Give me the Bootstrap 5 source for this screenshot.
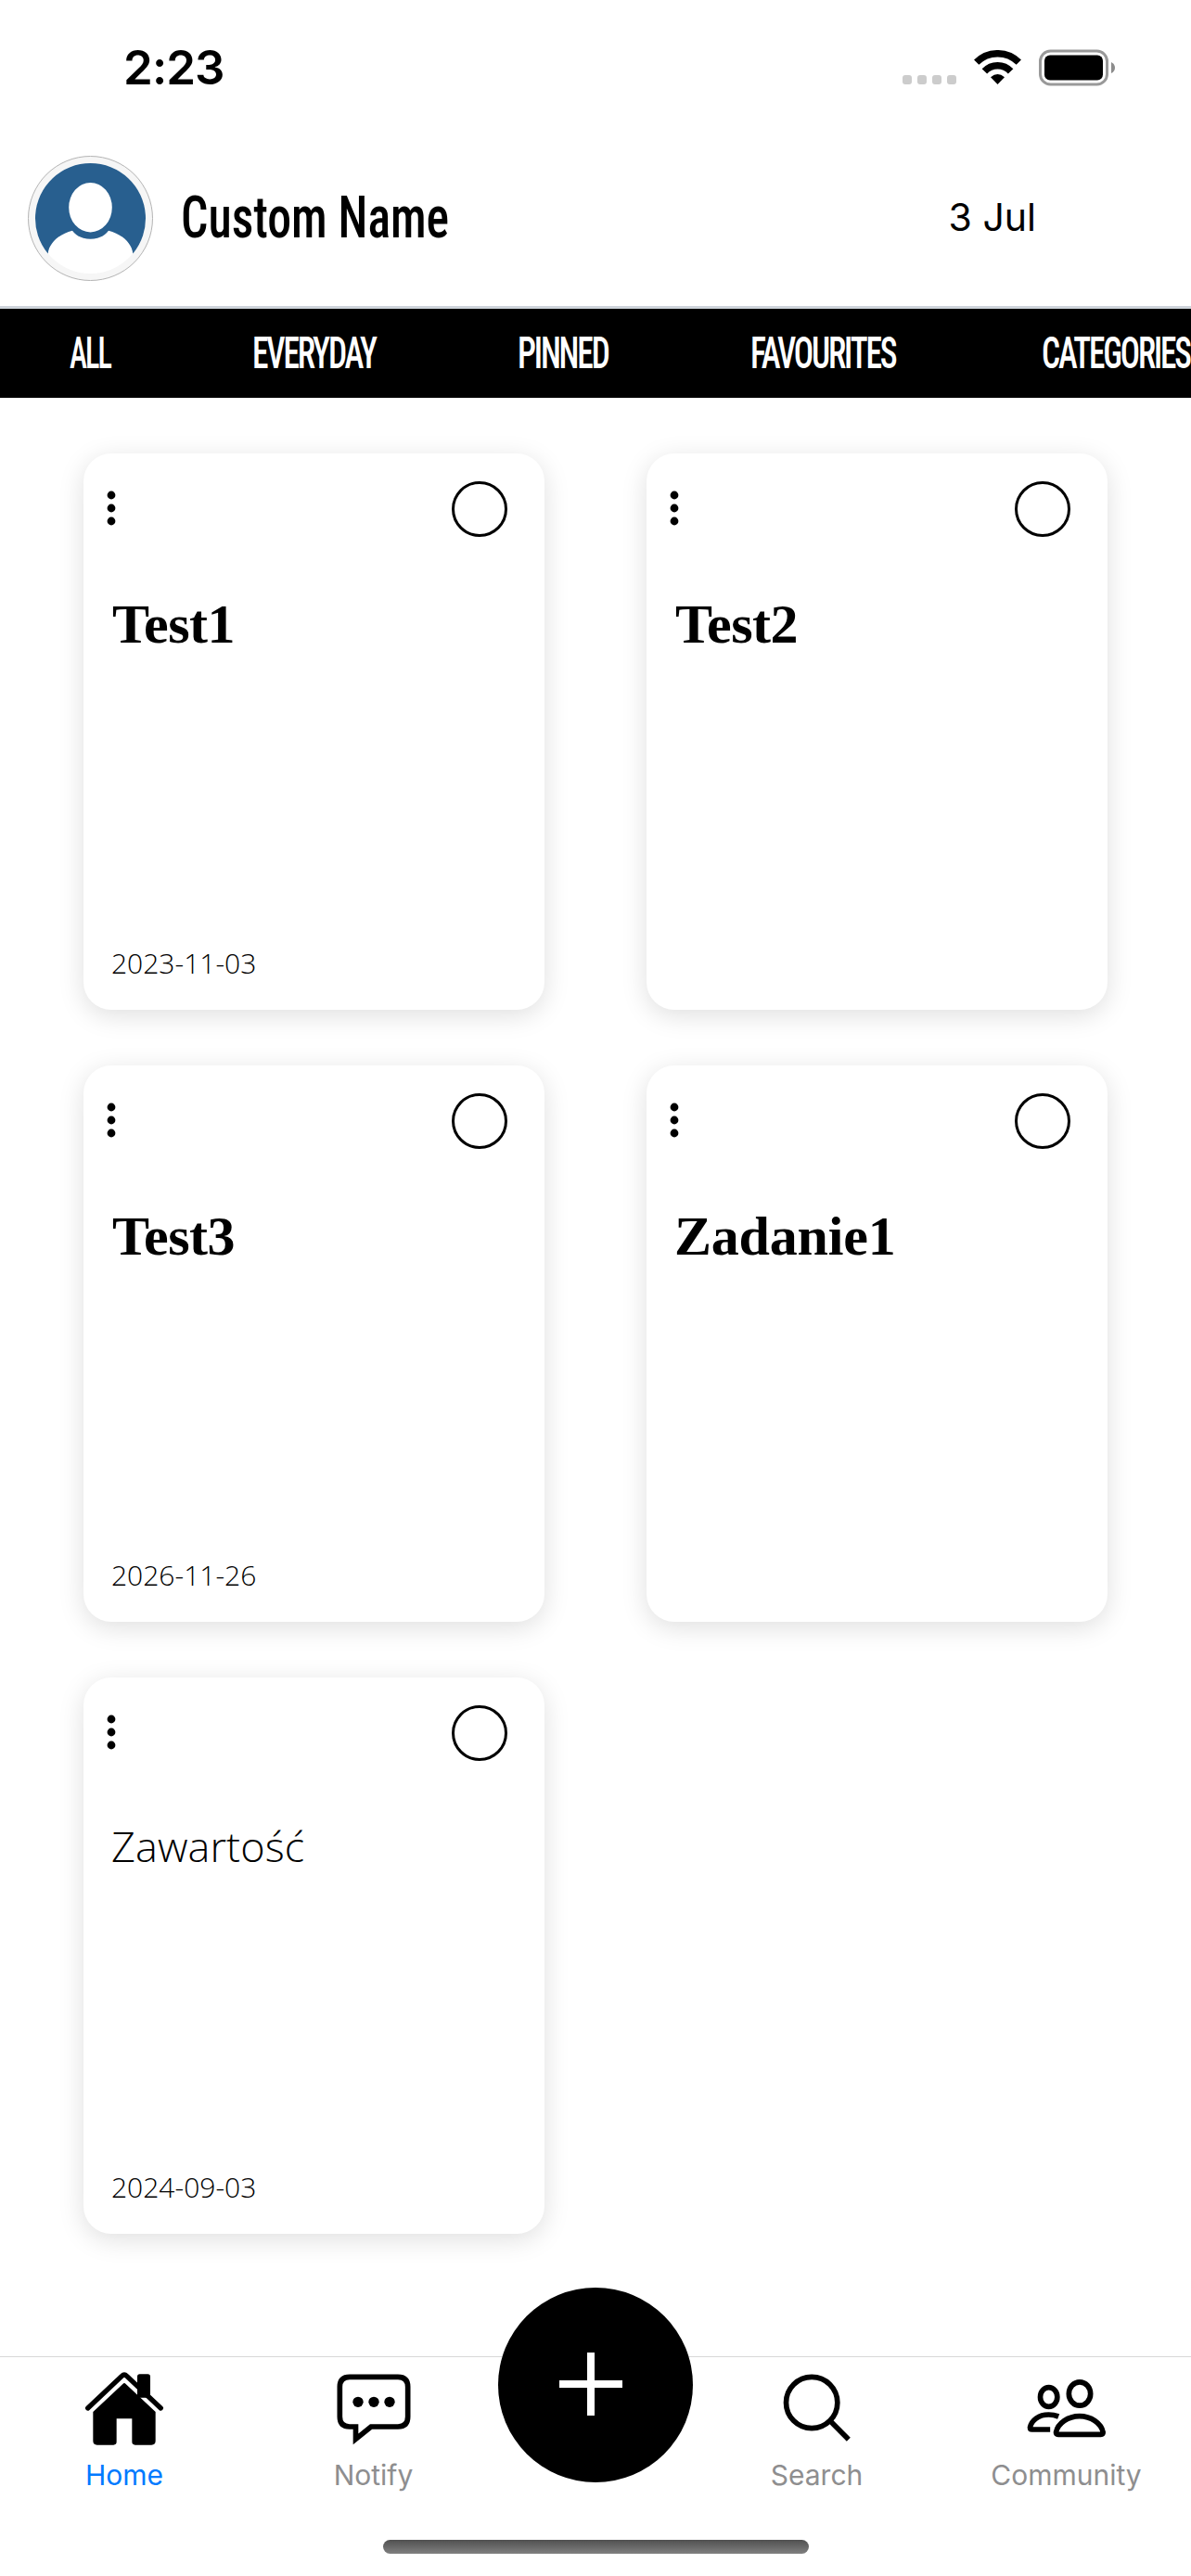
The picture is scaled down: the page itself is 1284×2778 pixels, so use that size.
<!DOCTYPE html>
<html lang="pl">
<head>
<meta charset="utf-8">
<meta name="viewport" content="width=device-width, initial-scale=1">
<title>Notes</title>
<link href="https://cdn.jsdelivr.net/npm/bootstrap@5.3.0/dist/css/bootstrap.min.css" rel="stylesheet">
<style>
  body { font-family: Inter, "Liberation Sans", sans-serif; color: #000; background: #fff; }
  .screen { width: 1284px; height: 2778px; }
  .status-bar { height: 141px; padding: 4px 81px 0 133px; }
  .clock { font-size: 51px; font-weight: 600; line-height: 60px; letter-spacing: -.9px; }
  .signal { gap: 6px; margin-right: 19px; padding-top: 27px; }
  .signal i { width: 10px; height: 10px; border-radius: 3px; background: #ccc; }
  .wifi { margin-right: 19px; }
  .profile { height: 192px; border-bottom: 3px solid #ced3da; padding: 0 167px 0 30px; }
  .condensed { font-family: Roboto, "Liberation Sans", sans-serif; font-stretch: 75%; transform-origin: left center; white-space: nowrap; }
  .user-name { font-size: 63px; font-weight: 500; line-height: 76px; margin: -2px 0 0 30px; transform: scaleX(.821); }
  .today { font-size: 41px; line-height: 50px; margin-top: -3px; }
  .filters { height: 96px; background: #000; padding-left: 74px; }
  .filters a { color: #fff; flex: none; text-decoration: none; margin-right: 155px; }
  .filters a:last-child { margin-right: 0; }
  .filters .condensed { display: block; font-size: 49px; font-weight: 500; line-height: 60px; letter-spacing: -3px; transform: scaleX(.725); }
  .f-all { width: 42.5px; } .f-every { width: 131.5px; } .f-pin { width: 96px; } .f-fav { width: 160px; } .f-cat { width: 157px; }
  .filters .f-all .condensed { transform: translateX(1px) scaleX(.66); }
  .filters .f-cat .condensed { transform: translateX(-1px) scaleX(.72); }
  .board { padding: 60px 90px 0; gap: 60px 110px; }
  .note { width: 497px; height: 600px; border: 0; border-radius: 30px; background: #fff; padding: 30px; box-shadow: 0 6px 28px rgba(0,0,0,.13); }
  .note-top { height: 60px; margin: 0 10px 0 -5px; }
  .check-ring { width: 60px; height: 60px; border: 3px solid #000; border-radius: 50%; }
  .note-title { font: 700 60px/72px "Liberation Serif", serif; letter-spacing: -.2px; margin: 58px 0 0; }
  .tight { letter-spacing: -.5px; padding-left: 1px; }
  .note-text { font: 300 45px/72px "Open Sans", sans-serif; letter-spacing: .1px; margin: 56px 0 0; }
  .note-date { font: 300 30px/41px "Open Sans", sans-serif; }
  .tab-bar { height: 237px; border-top: 1px solid #d8d8d8; background: #fff; }
  .tab-row { height: 197px; }
  .tab-item { width: 269px; padding-top: 12px; color: #8e8e8f; font-size: 30px; line-height: 40px; text-decoration: none; }
  .tab-item svg { width: 96px; height: 88px; margin-bottom: 7px; }
  .tab-item.active { width: 268px; color: #007aff; }
  .fab-slot { width: 209px; }
  .fab { width: 210px; height: 210px; margin-top: -75px; background: #000; border: 0; border-radius: 50%; padding: 0; flex: none; }
  .home-indicator { width: 459px; height: 15px; border-radius: 8px; background: linear-gradient(#505050, #808080); }
</style>
<script src="https://cdn.jsdelivr.net/npm/bootstrap@5.3.0/dist/js/bootstrap.bundle.min.js"></script>
</head>
<body>
<div class="screen d-flex flex-column overflow-hidden">

  <div class="status-bar d-flex align-items-center justify-content-between">
    <div class="clock">2:23</div>
    <div class="d-flex align-items-center">
      <div class="signal d-flex"><i></i><i></i><i></i><i></i></div>
      <svg class="wifi" width="51" height="38" viewBox="0 0 51 38">
        <g fill="none" stroke="#000" stroke-width="7.5">
          <path d="M2.7 13.2A32.2 32.2 0 0 1 48.3 13.2"/>
          <path d="M11.4 22.9A19.2 19.2 0 0 1 39.6 22.9"/>
        </g>
        <path d="M25.5 37L18 29.3Q25.500 22.500 33 29.300Z"/>
      </svg>
      <svg width="83" height="40" viewBox="0 0 83 40">
        <rect x="1.500" y="2" width="72" height="36" rx="11" fill="none" stroke="#999" stroke-width="3"/>
        <rect x="6" y="6.500" width="63" height="27" rx="6"/>
        <path d="M78 14Q82 16 82 20T78 26Z" fill="#8c8c8c"/>
      </svg>
    </div>
  </div>

  <header class="profile d-flex align-items-center">
    <svg class="flex-shrink-0" width="135" height="135" viewBox="0 0 135 135">
      <circle cx="67.500" cy="67.500" r="67" fill="#f6f6f6" stroke="#b4b4b4" stroke-width="1"/>
      <circle cx="67.500" cy="67.500" r="59.500" fill="#fff"/>
      <path fill="#285f8f" d="M21.700 105.500A59.500 59.500 0 1 1 113.300 105.500C112 93 100 84 87 80.700C83 86.500 76 89.700 67.500 89.700S52 86.500 48 80.700C35 84 23 93 21.700 105.500Z"/>
      <ellipse cx="67.500" cy="55.700" rx="23.300" ry="26.700" fill="#fff"/>
    </svg>
    <div class="user-name condensed">Custom Name</div>
    <div class="today ms-auto">3 Jul</div>
  </header>

  <nav class="filters d-flex align-items-center flex-shrink-0">
    <a href="#" class="f-all"><span class="condensed">ALL</span></a>
    <a href="#" class="f-every"><span class="condensed">EVERYDAY</span></a>
    <a href="#" class="f-pin"><span class="condensed">PINNED</span></a>
    <a href="#" class="f-fav"><span class="condensed">FAVOURITES</span></a>
    <a href="#" class="f-cat"><span class="condensed">CATEGORIES</span></a>
  </nav>

  <main class="board d-flex flex-wrap align-content-start">
    <article class="note card">
      <div class="note-top d-flex justify-content-between"><svg width="10" height="60" viewBox="0 0 10 60"><circle cx="5" cy="15" r="4.400"/><circle cx="5" cy="29" r="4.400"/><circle cx="5" cy="43" r="4.400"/></svg><span class="check-ring"></span></div>
      <h2 class="note-title tight">Test1</h2>
      <div class="note-date mt-auto">2023-11-03</div>
    </article>
    <article class="note card">
      <div class="note-top d-flex justify-content-between"><svg width="10" height="60" viewBox="0 0 10 60"><circle cx="5" cy="15" r="4.400"/><circle cx="5" cy="29" r="4.400"/><circle cx="5" cy="43" r="4.400"/></svg><span class="check-ring"></span></div>
      <h2 class="note-title tight">Test2</h2>
    </article>
    <article class="note card">
      <div class="note-top d-flex justify-content-between"><svg width="10" height="60" viewBox="0 0 10 60"><circle cx="5" cy="15" r="4.400"/><circle cx="5" cy="29" r="4.400"/><circle cx="5" cy="43" r="4.400"/></svg><span class="check-ring"></span></div>
      <h2 class="note-title tight">Test3</h2>
      <div class="note-date mt-auto">2026-11-26</div>
    </article>
    <article class="note card">
      <div class="note-top d-flex justify-content-between"><svg width="10" height="60" viewBox="0 0 10 60"><circle cx="5" cy="15" r="4.400"/><circle cx="5" cy="29" r="4.400"/><circle cx="5" cy="43" r="4.400"/></svg><span class="check-ring"></span></div>
      <h2 class="note-title">Zadanie1</h2>
    </article>
    <article class="note card">
      <div class="note-top d-flex justify-content-between"><svg width="10" height="60" viewBox="0 0 10 60"><circle cx="5" cy="15" r="4.400"/><circle cx="5" cy="29" r="4.400"/><circle cx="5" cy="43" r="4.400"/></svg><span class="check-ring"></span></div>
      <p class="note-text">Zawartość</p>
      <div class="note-date mt-auto">2024-09-03</div>
    </article>
  </main>

  <footer class="tab-bar mt-auto flex-shrink-0">
    <nav class="tab-row d-flex">
      <a href="#" class="tab-item active d-flex flex-column align-items-center">
        <svg viewBox="18 42 288 264">
          <rect x="204" y="61" width="42" height="76" rx="8"/>
          <path d="M44 171L154 67Q162 59 170 67L280 171" fill="none" stroke="#000" stroke-width="16" stroke-linecap="round"/>
          <path d="M157 93Q162 87 167 93L263 183V277Q263 290 250 290H197Q187 290 187 280V205H137V280Q137 290 127 290H74Q61 290 61 277V183Z"/>
        </svg>
        <span>Home</span>
      </a>
      <a href="#" class="tab-item d-flex flex-column align-items-center">
        <svg viewBox="1065 342 288 264">
          <path d="M1131 370H1287Q1319 370 1319 402V499Q1319 531 1287 531H1200L1150.500 571V531H1131Q1099 531 1099 499V402Q1099 370 1131 370Z" fill="none" stroke="#000" stroke-width="17"/>
          <circle cx="1158" cy="451" r="17"/><circle cx="1209" cy="451" r="17"/><circle cx="1260" cy="451" r="17"/>
        </svg>
        <span>Notify</span>
      </a>
      <div class="fab-slot d-flex justify-content-center">
        <button type="button" class="fab" aria-label="Add">
          <svg class="d-block" width="210" height="210" viewBox="0 0 210 210"><path d="M66 104H134M100 70V138" stroke="#fff" stroke-width="8"/></svg>
        </button>
      </div>
      <a href="#" class="tab-item d-flex flex-column align-items-center">
        <svg viewBox="98.500 102 288 264" fill="none" stroke="#000" stroke-width="17">
          <circle cx="225" cy="213" r="83"/><path d="M283 271L344 332"/>
        </svg>
        <span>Search</span>
      </a>
      <a href="#" class="tab-item d-flex flex-column align-items-center">
        <svg viewBox="906.500 102 288 264" fill="none" stroke="#000" stroke-width="17">
          <ellipse cx="992.500" cy="195" rx="27.500" ry="31"/>
          <ellipse cx="1092.500" cy="184.500" rx="35" ry="38"/>
          <path d="M1024 258C1014 254 1003 252 992 252C960 252 937 270 932 293Q932 300 938 300H997"/>
          <path d="M1016 309C1022 280 1055 257 1092 257S1162 280 1168 309Q1168 316 1161 316H1023Q1016 316 1016 309Z"/>
        </svg>
        <span>Community</span>
      </a>
    </nav>
    <div class="home-indicator mx-auto"></div>
  </footer>
</div>
</body>
</html>
